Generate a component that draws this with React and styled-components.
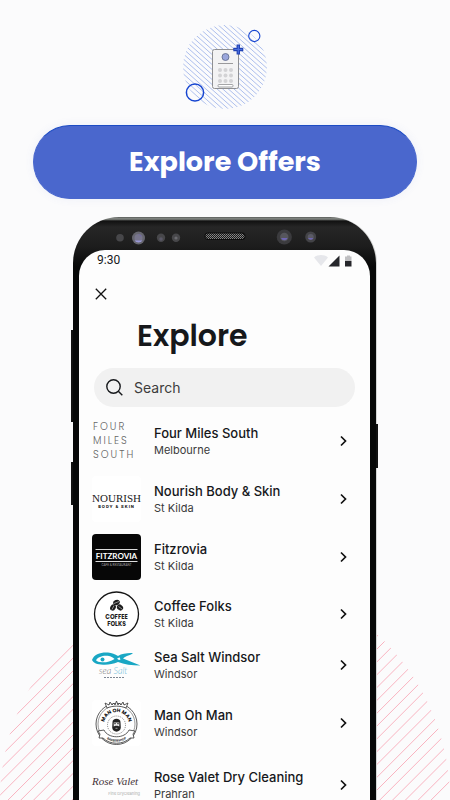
import React from 'react'
import styled, {createGlobalStyle} from 'styled-components'

const GlobalStyle = createGlobalStyle`
  * {
    box-sizing: border-box;
  }
  body {
    margin: 0;
    background: #fbfbfc;
    font-family: 'Inter', sans-serif;
    color: #16181b;
  }
`

const Page = styled.main`
  position: relative;
  display: flex;
  flex-direction: column;
  align-items: stretch;
  height: 100vh;
  overflow: hidden;
  padding-top: 24px;
`

const Backdrop = styled.svg`
  position: absolute;
  left: 0;
  bottom: 0;
  width: 100%;
  height: auto;
`

const Illustration = styled.svg`
  display: block;
  align-self: center;
  flex: none;
`

const ExploreButton = styled.button`
  position: relative;
  flex: none;
  height: 74px;
  margin: 15px 33px 18px;
  border: 1px solid #4a68cd;
  border-top-color: #1d4cc4;
  border-radius: 37px;
  background: #4a67cd;
  box-shadow: 0 0 10px rgba(74, 103, 205, 0.08);
  color: #fff;
  font-family: 'Poppins', 'Inter', sans-serif;
  font-size: 27px;
  font-weight: 700;
  line-height: 36px;
  cursor: pointer;
`

const Phone = styled.section`
  position: relative;
  flex: 1;
  display: flex;
  flex-direction: column;
  margin: 0 74px 0 73px;
  padding: 0 6px;
  border-radius: 46px 46px 0 0;
  background: linear-gradient(#5a5d5a, #8a8e8a 2px, #111 4px, #262626 10px, #1c1c1c 30px, #070808 50px);
  box-shadow: 1px 0 0 #d4d6d5;
`

const SideKey = styled.span`
  position: absolute;
  top: ${({top}) => top}px;
  ${({side}) => side}: -2px;
  width: 2px;
  height: ${({size}) => size}px;
  background: #111;
`

const Sensors = styled.svg`
  display: block;
  align-self: center;
  flex: none;
`

const Screen = styled.div`
  flex: 1;
  border-radius: 26px 26px 0 0;
  background: #fdfdfd;
`

const StatusBar = styled.div`
  display: flex;
  justify-content: space-between;
  align-items: center;
  height: 20px;
  padding: 0 18px;
  font-family: 'Roboto', sans-serif;
  font-size: 12px;
  font-weight: 400;
`

const CloseButton = styled.button`
  display: block;
  margin: 12px 0 0 10px;
  padding: 6px;
  border: 0;
  background: none;
  color: #111;
  cursor: pointer;

  svg {
    display: block;
  }
`

const Title = styled.h1`
  margin: 12px 58px 14px;
  font-family: 'Poppins', 'Inter', sans-serif;
  font-size: 30px;
  font-weight: 600;
  line-height: 36px;
`

const SearchField = styled.label`
  display: flex;
  align-items: center;
  gap: 11px;
  height: 39px;
  margin: 0 15px;
  padding: 0 12px;
  border-radius: 20px;
  background: #f1f1f1;

  svg {
    flex: none;
  }
`

const SearchInput = styled.input`
  flex: 1;
  min-width: 0;
  padding: 0;
  border: 0;
  outline: none;
  background: none;
  font-family: inherit;
  font-size: 14px;
  line-height: 20px;

  &::placeholder {
    color: #3c3c3c;
    opacity: 1;
  }
`

const OfferList = styled.ul`
  display: flex;
  flex-direction: column;
  gap: 12px;
  margin: 11px 0 0;
  padding: 0 20px 0 13px;
  list-style: none;
`

const OfferLink = styled.a`
  display: flex;
  align-items: center;
  gap: 13px;
  height: ${({height}) => height}px;
  color: inherit;
  text-decoration: none;

  svg {
    display: block;
    flex: none;
    overflow: visible;
  }
`

const OfferText = styled.span`
  flex: 1;
  display: flex;
  flex-direction: column;
  white-space: nowrap;
`

const OfferName = styled.span`
  font-size: 13px;
  font-weight: 500;
  line-height: 18px;
`

const OfferPlace = styled.span`
  color: #3a3a3a;
  font-size: 11px;
  line-height: 16px;
`

const range = (count) => Array.from({length: count}, (_, i) => i)

const Stripes = () => (
  <Backdrop viewBox="0 0 450 226" aria-hidden="true">
    <clipPath id="dome">
      <circle cx="225" cy="226" r="225" />
    </clipPath>
    <g clipPath="url(#dome)" stroke="#f9b3c0" strokeWidth="1">
      {range(52).map((i) => {
        const sum = 3.3 + i * 12.82
        return <line key={i} x1={sum} y1="0" x2={sum - 226} y2="226" />
      })}
    </g>
  </Backdrop>
)

const Keypad = () => (
  <Illustration width="90" height="86" viewBox="180 24 90 86" aria-hidden="true">
    <clipPath id="disc">
      <circle cx="225" cy="67" r="42" />
    </clipPath>
    <g clipPath="url(#disc)" stroke="#adbfed" strokeWidth="1">
      {range(34).map((i) => (
        <line key={i} x1="180" y1={-54 + i * 5} x2="270" y2={26 + i * 5} />
      ))}
    </g>
    <rect x="212.5" y="49.5" width="26" height="39" rx="2" fill="#f3f3f4" stroke="#8e8f92" />
    <circle cx="225.5" cy="57" r="3.5" fill="#9aa6dc" stroke="#5b6688" strokeWidth="0.8" />
    <path d="M218 63.5h15" stroke="#9a9a9c" />
    <g fill="#d3d3d5">
      {range(9).map((i) => (
        <circle key={i} cx={220 + (i % 3) * 5.5} cy={70 + Math.floor(i / 3) * 5.5} r="2" />
      ))}
    </g>
    <rect x="218" y="84.5" width="15" height="2.5" rx="1" fill="#fff" stroke="#8e8f92" strokeWidth="0.8" />
    <path d="M238.3 44.5v10M233.3 49.5h10" stroke="#2142b4" strokeWidth="3.4" />
    <path d="M238.3 45.5v8M234.3 49.5h8" stroke="#4a6fe0" strokeWidth="1.2" />
    <circle cx="254.3" cy="36" r="5.6" fill="none" stroke="#1746d1" strokeWidth="1.1" />
    <circle cx="195" cy="92.5" r="8.6" fill="none" stroke="#1746d1" strokeWidth="1.5" />
  </Illustration>
)

const SensorBar = () => (
  <Sensors width="303" height="33" viewBox="73 217 303 33" aria-hidden="true">
    <defs>
      <pattern id="mesh" width="2" height="2" patternUnits="userSpaceOnUse">
        <rect width="2" height="2" fill="#1a1a1a" />
        <rect width="1" height="1" fill="#888" />
        <rect x="1" y="1" width="1" height="1" fill="#777" />
      </pattern>
    </defs>
    <circle cx="120" cy="237.7" r="3.8" fill="#47474a" />
    <circle cx="138.5" cy="238" r="6.5" fill="#66666f" />
    <circle cx="138.5" cy="238" r="4" fill="#77758c" />
    <path d="M138 234a5 5 0 0 1 4 3z" fill="#6a5fae" />
    <path d="M134.5 240.500h8a5 5 0 0 1-8 0" fill="#9a98d8" />
    <circle cx="161" cy="237.7" r="4.2" fill="#47474a" />
    <circle cx="161" cy="239" r="1.8" fill="#5b5968" />
    <circle cx="176" cy="237.7" r="4.2" fill="#47474a" />
    <circle cx="176" cy="238" r="1.6" fill="#6b6b70" />
    <rect x="204.5" y="232.5" width="41" height="7.5" rx="3.7" fill="#0b0b0b" />
    <rect x="205.5" y="233.5" width="39" height="5.5" rx="2.7" fill="url(#mesh)" />
    <circle cx="284.3" cy="237" r="7.6" fill="#3b3b3e" />
    <circle cx="284.3" cy="237" r="4.2" fill="#56565c" />
    <path d="M281 238h6.6a3.5 3.5 0 0 1-6.6 0" fill="#6f66b4" />
    <circle cx="310.7" cy="237" r="5.5" fill="#434347" />
    <circle cx="310.7" cy="237" r="3" fill="#5b5b66" />
    <path d="M308 238h5.4a3 3 0 0 1-5.4 0" fill="#6f66b4" />
  </Sensors>
)

const StatusIcons = () => (
  <svg width="38" height="14" viewBox="0 0 38 14" aria-hidden="true">
    <path d="M0 4.5C4 1.300 10 1.300 14 4.500L7 13z" fill="#e6e7eb" />
    <path d="M25.5 2.500v11H14.5z" fill="#26272b" />
    <path d="M31 3.500h2v-1h3v1h1.500V8H31z" fill="#bfbfc1" />
    <path d="M31 8h6.500v5.500H31z" fill="#26272b" />
  </svg>
)

const Chevron = () => (
  <svg width="14" height="14" viewBox="0 0 14 14" fill="none" aria-hidden="true">
    <path d="M5 2.500 9.500 7 5 11.500" stroke="#111" strokeWidth="1.7" />
  </svg>
)

const FourMiles = () => (
  <svg width="49" height="46" viewBox="0 0 49 46" aria-hidden="true">
    <g fill="#666" fontFamily="Poppins, Inter, sans-serif" fontSize="10" fontWeight="300" letterSpacing="2">
      <text x="1" y="12">FOUR</text>
      <text x="1" y="26">MILES</text>
      <text x="1" y="40">SOUTH</text>
    </g>
  </svg>
)

const Nourish = () => (
  <svg width="49" height="46" viewBox="0 0 49 46" aria-hidden="true">
    <rect width="49" height="46" rx="4" fill="#fff" />
    <g fill="#222" textAnchor="middle">
      <text x="24.5" y="26" fontFamily="Liberation Serif, serif" fontSize="11">NOURISH</text>
      <text x="24.5" y="32" fontFamily="Inter, sans-serif" fontSize="4" fontWeight="800" letterSpacing="1">BODY &amp; SKIN</text>
    </g>
  </svg>
)

const Fitzrovia = () => (
  <svg width="49" height="46" viewBox="0 0 49 46" aria-hidden="true">
    <rect width="49" height="46" rx="4" fill="#070707" />
    <path d="M3.5 15.500h42M3.5 27.500h42" stroke="#ddd" />
    <g fill="#fff" textAnchor="middle" fontFamily="Lato, sans-serif">
      <text x="24.5" y="25" fontSize="8" fontWeight="700">FITZROVIA</text>
      <text x="24.5" y="32" fontSize="3" fill="#aaa">CAFE &amp; RESTAURANT</text>
    </g>
  </svg>
)

const CoffeeFolks = () => (
  <svg width="49" height="46" viewBox="0 0 49 46" aria-hidden="true">
    <circle cx="24.5" cy="23" r="22" fill="#fff" stroke="#151515" strokeWidth="1.3" />
    <g fill="#1d1d1d">
      <ellipse cx="24.5" cy="11.5" rx="3.4" ry="2.6" transform="rotate(-20 24.5 11.5)" />
      <ellipse cx="21" cy="16.5" rx="2.7" ry="3.3" transform="rotate(30 21 16.5)" />
      <ellipse cx="28" cy="16.5" rx="2.7" ry="3.3" transform="rotate(-50 28 16.5)" />
    </g>
    <path d="M22 12.500l5-2M20 18.500l2-4M26.500 15.500l3.500 2.500" stroke="#fff" strokeWidth="0.5" />
    <g fill="#1d1d1d" textAnchor="middle" fontFamily="Poppins, Inter, sans-serif" fontSize="6" fontWeight="700">
      <text x="24.5" y="28">COFFEE</text>
      <text x="24.5" y="35">FOLKS</text>
    </g>
  </svg>
)

const SeaSalt = () => (
  <svg width="49" height="34" viewBox="0 0 49 34" fill="none" aria-hidden="true">
    <path
      d="M0 12C2 6 9 4 16 4.500c4 .4 7 1.800 10 3.500C30 5.500 35 4.800 41 5c-2 2.500-7 2.500-10 5.500l17.500 7C40 17.500 32 16.500 26 14c-5 2-10 3-15 2.700C5 16.500 1.500 15 0 12z"
      fill="#19a7c4"
    />
    <path d="M4 12.200c2-3.700 8-5.200 13-4.200 2.500.6 4 1.800 5.500 3-4 2.500-8 3.500-12.500 3.300-3-.2-5-.8-6-2.100z" fill="#fff" />
    <path d="M25 10.800l2.500-1.600 1 2.200-1.500.6z" fill="#fff" />
    <circle cx="10.5" cy="11.5" r="2" fill="#19a7c4" />
    <text x="7" y="26" fill="#777" fontFamily="Lato, sans-serif" fontStyle="italic" fontWeight="300" fontSize="9">
      sea <tspan fill="#6cbbd8">Salt</tspan>
    </text>
    <path d="M12 29.500h21" stroke="#7d8794" strokeDasharray="2 1" />
  </svg>
)

const ManOhMan = () => (
  <svg width="49" height="46" viewBox="0 0 49 46" fill="none" aria-hidden="true">
    <rect width="49" height="46" rx="4" fill="#fff" />
    <g stroke="#333">
      <circle cx="24.5" cy="24" r="20.5" strokeWidth="0.8" />
      <circle cx="24.5" cy="24" r="18.5" strokeWidth="0.5" />
      <circle cx="24.5" cy="25" r="9" strokeWidth="0.6" strokeDasharray="1 1" />
    </g>
    <path d="M15 8l-2-5 4 2 1-3 2 3 2-2 1 2 1.500-4L26 5l1-2 2 2 2-3 1 3 4-2-2 5c-6-2.500-13-2.500-19 0z" fill="#fff" stroke="#333" strokeWidth="0.8" />
    <path id="arch" d="M12.500 28a12.500 12.500 0 1 1 24 0" />
    <text fill="#111" fontFamily="Poppins, Inter, sans-serif" fontSize="5" fontWeight="700" textAnchor="middle">
      <textPath href="#arch" startOffset="50%">MAN OH MAN</textPath>
    </text>
    <path d="M20.5 22.500c-.5-5 8.500-5 8 0l.3 5c0 5.500-8.600 5.500-8.600 0z" fill="#222" />
    <path d="M21.700 22.500h5.600v4l-1.600-.8h-2.400l-1.600.8z" fill="#eee" />
    <path d="M22 23.700h2M25 23.700h2M23.500 28.300h2" stroke="#222" strokeWidth="0.8" />
    <path d="M23.500 28.300h2" stroke="#eee" strokeWidth="0.6" />
    <path d="M6 31l6-1c4 9 21 9 25 0l6 1-2 3 1 4h-4c-7 7-20 7-27 0H7l1-4z" fill="#fff" stroke="#333" strokeWidth="0.8" />
    <path id="ribbon" d="M11.500 36c6 7.500 20 7.500 26 0" />
    <text fill="#222" fontFamily="Inter, sans-serif" fontSize="3" fontWeight="700" textAnchor="middle">
      <textPath href="#ribbon" startOffset="50%">BARBERSHOP</textPath>
    </text>
  </svg>
)

const RoseValet = () => (
  <svg width="49" height="42" viewBox="0 0 49 42" aria-hidden="true">
    <text x="0" y="21" fill="#443238" fontFamily="Liberation Serif, serif" fontStyle="italic" fontSize="11">
      Rose Valet
    </text>
    <text x="48" y="31" fill="#aaa" fontFamily="Inter, sans-serif" fontSize="4" textAnchor="end">
      Fine Drycleaning
    </text>
  </svg>
)

const offers = [
  {name: 'Four Miles South', place: 'Melbourne', Logo: FourMiles, height: 46},
  {name: 'Nourish Body & Skin', place: 'St Kilda', Logo: Nourish, height: 46},
  {name: 'Fitzrovia', place: 'St Kilda', Logo: Fitzrovia, height: 46},
  {name: 'Coffee Folks', place: 'St Kilda', Logo: CoffeeFolks, height: 44},
  {name: 'Sea Salt Windsor', place: 'Windsor', Logo: SeaSalt, height: 34},
  {name: 'Man Oh Man', place: 'Windsor', Logo: ManOhMan, height: 58},
  {name: 'Rose Valet Dry Cleaning', place: 'Prahran', Logo: RoseValet, height: 42}
]

const Offer = ({name, place, Logo, height}) => (
  <li>
    <OfferLink href="#" height={height}>
      <Logo />
      <OfferText>
        <OfferName>{name}</OfferName>
        <OfferPlace>{place}</OfferPlace>
      </OfferText>
      <Chevron />
    </OfferLink>
  </li>
)

export default function App() {
  return (
    <Page>
      <GlobalStyle />
      <Stripes />
      <Keypad />
      <ExploreButton type="button">Explore Offers</ExploreButton>
      <Phone>
        <SideKey side="left" top={113} size={92} />
        <SideKey side="left" top={245} size={43} />
        <SideKey side="right" top={207} size={44} />
        <SensorBar />
        <Screen>
          <StatusBar>
            <span>9:30</span>
            <StatusIcons />
          </StatusBar>
          <CloseButton type="button" aria-label="Close">
            <svg width="12" height="12" viewBox="0 0 12 12" fill="none" stroke="currentColor">
              <path d="M.8.8l10.400 10.400M11.200.8L.8 11.200" strokeWidth="1.3" />
            </svg>
          </CloseButton>
          <Title>Explore</Title>
          <SearchField>
            <svg width="17" height="17" viewBox="0 0 17 17" fill="none" stroke="#16181b" aria-hidden="true">
              <circle cx="7.5" cy="7.5" r="6.7" strokeWidth="1.4" />
              <path d="M12.300 12.300l4 4" strokeWidth="1.4" />
            </svg>
            <SearchInput type="text" placeholder="Search" aria-label="Search" />
          </SearchField>
          <OfferList>
            {offers.map((offer) => (
              <Offer key={offer.name} {...offer} />
            ))}
          </OfferList>
        </Screen>
      </Phone>
    </Page>
  )
}
